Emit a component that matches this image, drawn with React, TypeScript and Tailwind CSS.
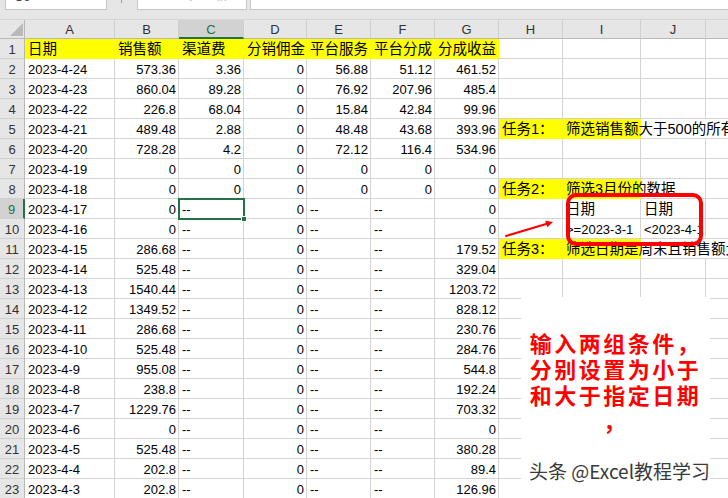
import clsx from "clsx";

type Spec = {
  v?: string;
  align?: "l" | "r";
  cjk?: boolean;
  yellow?: boolean;
  spill?: boolean;
  noR?: boolean;
  sel?: boolean;
};

const data: string[][] = [
  ["日期", "销售额", "渠道费", "分销佣金", "平台服务", "平台分成", "分成收益"],
  ["2023-4-24", "573.36", "3.36", "0", "56.88", "51.12", "461.52"],
  ["2023-4-23", "860.04", "89.28", "0", "76.92", "207.96", "485.4"],
  ["2023-4-22", "226.8", "68.04", "0", "15.84", "42.84", "99.96"],
  ["2023-4-21", "489.48", "2.88", "0", "48.48", "43.68", "393.96"],
  ["2023-4-20", "728.28", "4.2", "0", "72.12", "116.4", "534.96"],
  ["2023-4-19", "0", "0", "0", "0", "0", "0"],
  ["2023-4-18", "0", "0", "0", "0", "0", "0"],
  ["2023-4-17", "0", "--", "0", "--", "--", "0"],
  ["2023-4-16", "0", "--", "0", "--", "--", "0"],
  ["2023-4-15", "286.68", "--", "0", "--", "--", "179.52"],
  ["2023-4-14", "525.48", "--", "0", "--", "--", "329.04"],
  ["2023-4-13", "1540.44", "--", "0", "--", "--", "1203.72"],
  ["2023-4-12", "1349.52", "--", "0", "--", "--", "828.12"],
  ["2023-4-11", "286.68", "--", "0", "--", "--", "230.76"],
  ["2023-4-10", "525.48", "--", "0", "--", "--", "284.76"],
  ["2023-4-9", "955.08", "--", "0", "--", "--", "544.8"],
  ["2023-4-8", "238.8", "--", "0", "--", "--", "192.24"],
  ["2023-4-7", "1229.76", "--", "0", "--", "--", "703.32"],
  ["2023-4-6", "0", "--", "0", "--", "--", "0"],
  ["2023-4-5", "525.48", "--", "0", "--", "--", "380.28"],
  ["2023-4-4", "202.8", "--", "0", "--", "--", "89.4"],
  ["2023-4-3", "202.8", "--", "0", "--", "--", "126.96"],
];

// right-hand task notes, columns H I J
const extras: Record<number, Spec[]> = {
  5: [
    { v: "任务1：", cjk: true, yellow: true },
    { v: "筛选销售额大于500的所有数据", cjk: true, yellow: true, spill: true, noR: true },
    { noR: true },
  ],
  8: [
    { v: "任务2：", cjk: true, yellow: true },
    { v: "筛选3月份的数据", cjk: true, yellow: true, spill: true, noR: true },
    {},
  ],
  9: [{}, { v: "日期", cjk: true }, { v: "日期", cjk: true }],
  10: [{}, { v: ">=2023-3-1" }, { v: "<2023-4-1" }],
  11: [
    { v: "任务3：", cjk: true, yellow: true },
    { v: "筛选日期是周末且销售额大于500的数据", cjk: true, yellow: true, spill: true, noR: true },
    { noR: true },
  ],
};

const letters = ["A", "B", "C", "D", "E", "F", "G", "H", "I", "J", ""];

function Cell({ s }: { s: Spec }) {
  return (
    <div
      className={clsx(
        "h-5 border-b leading-[21px] whitespace-nowrap",
        !s.noR && "border-r",
        s.yellow
          ? "bg-[#ffff00] border-r-[#ffff00] border-b-[#ffff00]"
          : "border-r-[#d4d4d4] border-b-[#d4d4d4]",
        s.spill ? "relative z-10 overflow-visible" : "overflow-hidden",
        s.sel && "relative z-20 overflow-visible",
        s.align === "r" ? "pl-[3px] pr-[2px] text-right" : "pl-[3px] pr-[1px] text-left",
        s.cjk && "text-[14.5px]"
      )}
    >
      {s.v}
      {s.sel && (
        <>
          <div className="absolute -left-[1px] -top-[1px] h-[22px] w-[67px] border-2 border-[#217346]" />
          <div className="absolute left-[62px] top-[17px] h-[6px] w-[6px] border border-white bg-[#217346]" />
        </>
      )}
    </div>
  );
}

function FormulaBar() {
  return (
    <div className="flex h-5 border-b border-[#d4d4d4] bg-[#e6e6e6]">
      <div className="ml-[5px] h-[10px] w-[102px] overflow-hidden border-x border-b border-[#c6c6c6] bg-white">
        <div className="-mt-[10px] pl-[8px] text-[13px] leading-[13px] text-[#444]">C9</div>
      </div>
      <div className="ml-[14px] h-[3px] w-px bg-[#9a9a9a]" />
      <div className="ml-[15px] flex h-[10px] w-[110px] overflow-hidden border-x border-b border-[#c6c6c6] bg-white text-[#c4c4c4]">
        <span className="-mt-[10px] ml-[9px] text-[13px] leading-[13px]">✕</span>
        <span className="-mt-[10px] ml-[30px] text-[13px] leading-[13px]">✓</span>
        <span className="-mt-[10px] ml-[20px] text-[13px] italic leading-[13px]">fx</span>
      </div>
      <div className="ml-[3px] h-[10px] flex-1 border-b border-l border-[#c6c6c6] bg-white" />
    </div>
  );
}

function Sheet() {
  return (
    <div className="grid grid-cols-[25px_90px_64px_65px_63px_64px_64px_64px_64px_78px_65px_1fr]">
      {/* corner */}
      <div className="relative h-[19px] border-b border-r border-b-[#b8b8b8] border-r-[#b8b8b8] bg-[#e6e6e6]">
        <svg className="absolute left-0 top-0" width="25" height="19">
          <polygon points="23,3 23,16 10,16" fill="#b9b9b9" />
        </svg>
      </div>
      {letters.map((l, i) => (
        <div
          key={i}
          className={clsx(
            "h-[19px] text-center leading-[19px]",
            i < 10 && "border-r border-r-[#d0d0d0]",
            l === "C"
              ? "border-b-2 border-b-[#217346] bg-[#d2d2d2] text-[#217346]"
              : "border-b border-b-[#b8b8b8] bg-[#e6e6e6] text-[#333]"
          )}
        >
          {l}
        </div>
      ))}

      {data.map((vals, idx) => {
        const r = idx + 1;
        const cells: Spec[] = vals.map((v) => ({
          v,
          align: r === 1 || !/^[\d.]+$/.test(v) ? "l" : "r",
          cjk: r === 1,
          yellow: r === 1,
        }));
        if (r === 9) cells[2].sel = true;
        const ext = extras[r] ?? [{}, {}, {}];
        cells.push(...ext, { noR: true });
        return (
          <div key={r} className="contents">
            <div
              className={clsx(
                "h-5 border-b border-b-[#d0d0d0] text-center leading-[21px]",
                r === 9
                  ? "border-r-2 border-r-[#217346] bg-[#d2d2d2] text-[#217346]"
                  : "border-r border-r-[#b8b8b8] bg-[#e6e6e6] text-[#333]"
              )}
            >
              {r}
            </div>
            {cells.map((s, c) => (
              <Cell key={c} s={s} />
            ))}
          </div>
        );
      })}
    </div>
  );
}

function Annotations() {
  return (
    <>
      <div className="absolute left-[566px] top-[193px] z-30 h-[53px] w-[137px] rounded-[10px] border-4 border-[#ff0000]" />
      <svg className="absolute left-[500px] top-[215px] z-30" width="60" height="30" viewBox="0 0 60 30">
        <line x1="6" y1="21" x2="47" y2="8.7" stroke="#ff0000" strokeWidth="2" strokeLinecap="round" />
        <polygon points="53,7 47.4,12.2 45.2,5.8" fill="#ff0000" />
      </svg>
      <div className="absolute left-[521px] top-[297px] z-30 flex h-[201px] w-[189px] flex-col items-center bg-white pt-[32px] font-['Noto_Sans_CJK_SC',sans-serif] text-[22px] font-bold leading-[26px] tracking-[2.5px] text-[#ff0000]">
        <div className="h-[26px]">输入两组条件，</div>
        <div className="h-[26px]">分别设置为小于</div>
        <div className="h-[26px]">和大于指定日期</div>
        <div className="h-[26px]">，</div>
      </div>
      <div className="absolute left-[529px] top-[461px] z-40 font-['Noto_Sans_CJK_SC',sans-serif] text-[19px] leading-[19px] text-[#3a3a3a] [text-shadow:0_0_2px_#ffffff,0_0_1px_#ffffff]">
        头条 @Excel教程学习
      </div>
    </>
  );
}

export default function App() {
  return (
    <div className="relative h-[498px] w-[728px] overflow-hidden bg-white font-['Liberation_Sans','Noto_Sans_CJK_SC',sans-serif] text-[13px] text-black">
      <FormulaBar />
      <Sheet />
      <Annotations />
    </div>
  );
}
